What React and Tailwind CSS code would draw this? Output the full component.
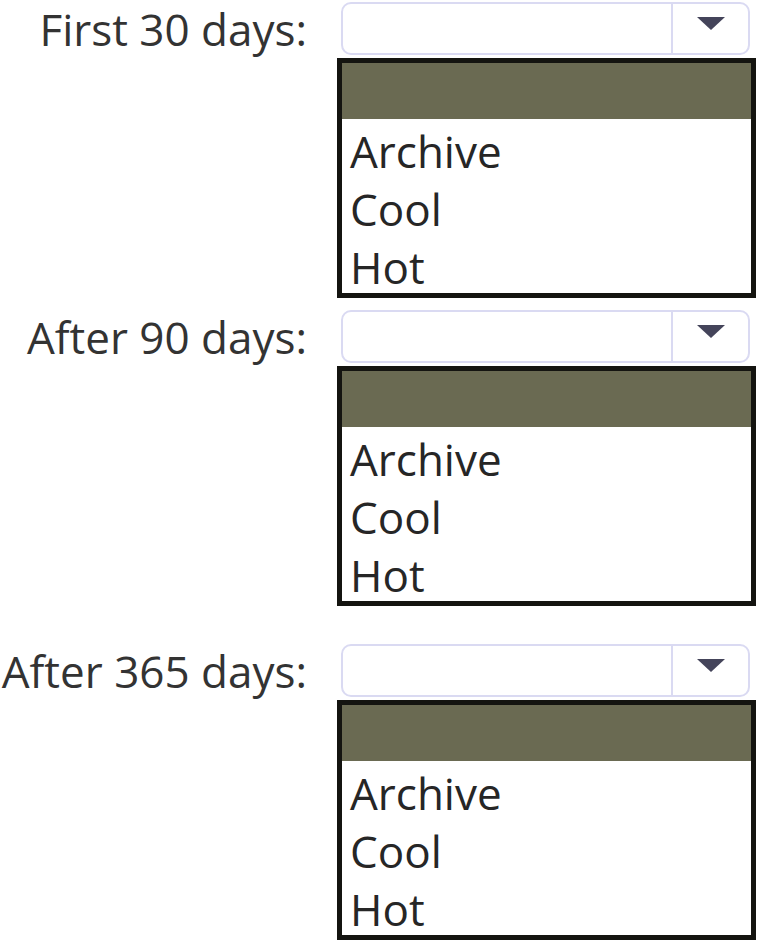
const tiers = ['Archive', 'Cool', 'Hot'];

const rows = [
  { label: 'First 30 days:', gap: 'mt-0' },
  { label: 'After 90 days:', gap: 'mt-[12px]' },
  { label: 'After 365 days:', gap: 'mt-[38px]' },
];

function Caret() {
  return (
    <svg width="30" height="15" viewBox="0 0 30 15" className="block">
      <polygon points="1,1 29,1 15,14" fill="#44445a" />
    </svg>
  );
}

function TierPicker({ label, gap }) {
  return (
    <div className={`flex ${gap}`}>
      <div className="w-[307px] h-[53px] flex items-center justify-end text-[#333333] whitespace-nowrap">
        {label}
      </div>
      <div className="ml-[30px] w-[419px]">
        <div className="ml-[4px] w-[409px] h-[53px] flex bg-white border-2 border-[#dadaf2] rounded-[10px]">
          <div className="flex-1" />
          <div className="w-[77px] border-l-2 border-[#dadaf2] flex items-center justify-center pb-[10px]">
            <Caret />
          </div>
        </div>
        <div className="mt-[3px] border-[5px] border-[#141410] bg-white">
          <div className="h-[56px] bg-[#6a6a52]" />
          {tiers.map((t) => (
            <div key={t} className="h-[58px] leading-[58px] pl-[8px] pt-[3px] text-[#262626]">
              {t}
            </div>
          ))}
        </div>
      </div>
    </div>
  );
}

export default function App() {
  return (
    <div
      className="w-[758px] h-[941px] bg-white pt-[2px] overflow-hidden text-[44px] leading-[58px]"
      style={{ fontFamily: '"Open Sans", "Noto Sans", sans-serif' }}
    >
      {rows.map((r) => (
        <TierPicker key={r.label} label={r.label} gap={r.gap} />
      ))}
    </div>
  );
}
